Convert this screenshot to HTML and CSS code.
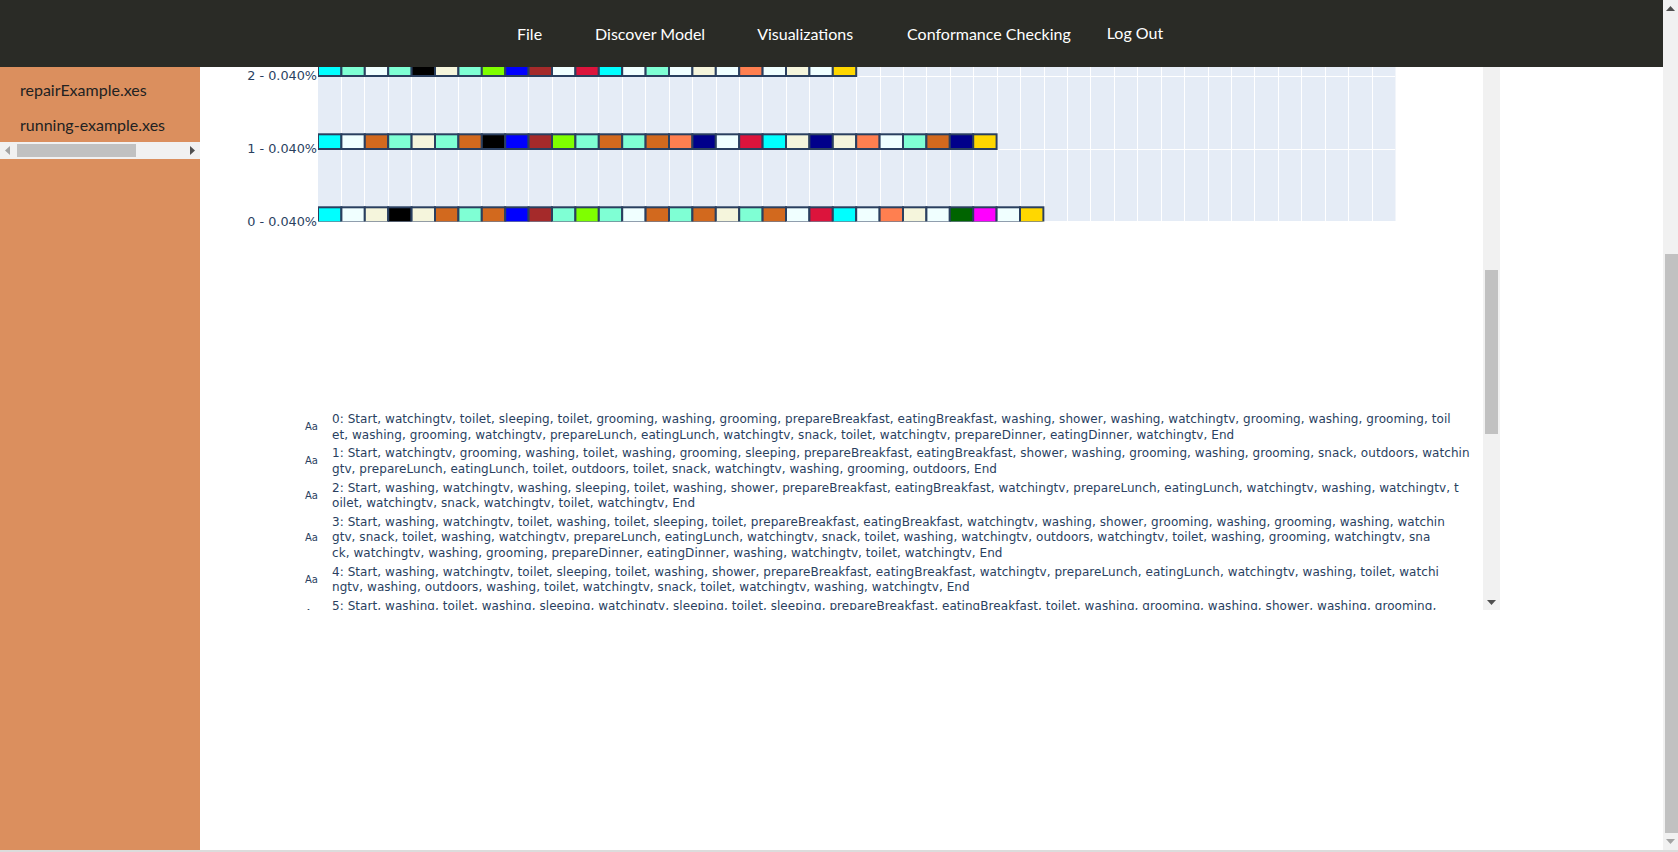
FILE: index.html
```html
<!DOCTYPE html>
<html lang="en">
<head>
<meta charset="utf-8">
<title>Process mining</title>
<link rel="stylesheet" href="styles.css">
</head>
<body>
<div class="page">
  <div class="column">
    <nav class="nav">
      <a class="nav-item nav-file">File</a>
      <a class="nav-item nav-discover">Discover Model</a>
      <a class="nav-item nav-vis">Visualizations</a>
      <a class="nav-item nav-conf">Conformance Checking</a>
      <a class="nav-item nav-logout">Log Out</a>
    </nav>
    <div class="below">
      <aside class="sidebar">
        <ul class="files">
          <li>repairExample.xes</li>
          <li>running-example.xes</li>
        </ul>
        <div class="hbar">
          <svg class="arrow" width="6" height="9" viewBox="0 0 6 9"><path d="M5 0v9L0 4.5z" fill="#a3a3a3"/></svg>
          <div class="hbar-track"><div class="hbar-thumb"></div></div>
          <svg class="arrow" width="6" height="9" viewBox="0 0 6 9"><path d="M1 0v9l5-4.5z" fill="#505050"/></svg>
        </div>
      </aside>
      <main class="main">
        <section class="panel">
          <div class="panel-body">
            <svg class="chart" width="1283" height="160" viewBox="200 67 1283 160">
              <defs><clipPath id="plot-clip"><rect x="318" y="0" width="1077.5" height="221.5"/></clipPath></defs>
              <rect x="318" y="0" width="1077.5" height="221" fill="#e5ecf6"/>
              <g clip-path="url(#plot-clip)">
              <g stroke="#fff" stroke-width="1">
                <path d="M341.5 0V221M364.5 0V221M388.5 0V221M411.5 0V221M435.5 0V221M458.5 0V221M481.5 0V221M505.5 0V221M528.5 0V221M552.5 0V221M575.5 0V221M598.5 0V221M622.5 0V221M645.5 0V221M669.5 0V221M692.5 0V221M716.5 0V221M739.5 0V221M762.5 0V221M786.5 0V221M809.5 0V221M833.5 0V221M856.5 0V221M880.5 0V221M903.5 0V221M926.5 0V221M950.5 0V221M973.5 0V221M997.5 0V221M1020.5 0V221M1044.5 0V221M1067.5 0V221M1090.5 0V221M1114.5 0V221M1137.5 0V221M1161.5 0V221M1184.5 0V221M1208.5 0V221M1231.5 0V221M1254.5 0V221M1278.5 0V221M1301.5 0V221M1325.5 0V221M1348.5 0V221M1372.5 0V221"/>
                <path d="M318 76.5H1395.5M318 149.5H1395.5"/>
              </g>
              <g class="bars" stroke="#2a3f5f" stroke-width="2">
                <rect x="318" y="61.3" fill="#00ffff"/><rect x="341.4" y="61.3" fill="#7fffd4"/><rect x="364.8" y="61.3" fill="#f0ffff"/><rect x="388.2" y="61.3" fill="#7fffd4"/><rect x="411.6" y="61.3" fill="#000000"/><rect x="435" y="61.3" fill="#f5f5dc"/><rect x="458.4" y="61.3" fill="#7fffd4"/><rect x="481.8" y="61.3" fill="#7fff00"/><rect x="505.2" y="61.3" fill="#0000ff"/><rect x="528.6" y="61.3" fill="#a52a2a"/><rect x="552" y="61.3" fill="#f0ffff"/><rect x="575.4" y="61.3" fill="#dc143c"/><rect x="598.8" y="61.3" fill="#00ffff"/><rect x="622.2" y="61.3" fill="#f0ffff"/><rect x="645.6" y="61.3" fill="#7fffd4"/><rect x="669" y="61.3" fill="#f0ffff"/><rect x="692.4" y="61.3" fill="#f5f5dc"/><rect x="715.8" y="61.3" fill="#f0ffff"/><rect x="739.2" y="61.3" fill="#ff7f50"/><rect x="762.6" y="61.3" fill="#f0ffff"/><rect x="786" y="61.3" fill="#f5f5dc"/><rect x="809.4" y="61.3" fill="#f0ffff"/><rect x="832.8" y="61.3" fill="#ffd700"/>
                <rect x="318" y="134.3" fill="#00ffff"/><rect x="341.4" y="134.3" fill="#f0ffff"/><rect x="364.8" y="134.3" fill="#d2691e"/><rect x="388.2" y="134.3" fill="#7fffd4"/><rect x="411.6" y="134.3" fill="#f5f5dc"/><rect x="435" y="134.3" fill="#7fffd4"/><rect x="458.4" y="134.3" fill="#d2691e"/><rect x="481.8" y="134.3" fill="#000000"/><rect x="505.2" y="134.3" fill="#0000ff"/><rect x="528.6" y="134.3" fill="#a52a2a"/><rect x="552" y="134.3" fill="#7fff00"/><rect x="575.4" y="134.3" fill="#7fffd4"/><rect x="598.8" y="134.3" fill="#d2691e"/><rect x="622.2" y="134.3" fill="#7fffd4"/><rect x="645.6" y="134.3" fill="#d2691e"/><rect x="669" y="134.3" fill="#ff7f50"/><rect x="692.4" y="134.3" fill="#00008b"/><rect x="715.8" y="134.3" fill="#f0ffff"/><rect x="739.2" y="134.3" fill="#dc143c"/><rect x="762.6" y="134.3" fill="#00ffff"/><rect x="786" y="134.3" fill="#f5f5dc"/><rect x="809.4" y="134.3" fill="#00008b"/><rect x="832.8" y="134.3" fill="#f5f5dc"/><rect x="856.2" y="134.3" fill="#ff7f50"/><rect x="879.6" y="134.3" fill="#f0ffff"/><rect x="903" y="134.3" fill="#7fffd4"/><rect x="926.4" y="134.3" fill="#d2691e"/><rect x="949.8" y="134.3" fill="#00008b"/><rect x="973.2" y="134.3" fill="#ffd700"/>
                <rect x="318" y="207.3" fill="#00ffff"/><rect x="341.4" y="207.3" fill="#f0ffff"/><rect x="364.8" y="207.3" fill="#f5f5dc"/><rect x="388.2" y="207.3" fill="#000000"/><rect x="411.6" y="207.3" fill="#f5f5dc"/><rect x="435" y="207.3" fill="#d2691e"/><rect x="458.4" y="207.3" fill="#7fffd4"/><rect x="481.8" y="207.3" fill="#d2691e"/><rect x="505.2" y="207.3" fill="#0000ff"/><rect x="528.6" y="207.3" fill="#a52a2a"/><rect x="552" y="207.3" fill="#7fffd4"/><rect x="575.4" y="207.3" fill="#7fff00"/><rect x="598.8" y="207.3" fill="#7fffd4"/><rect x="622.2" y="207.3" fill="#f0ffff"/><rect x="645.6" y="207.3" fill="#d2691e"/><rect x="669" y="207.3" fill="#7fffd4"/><rect x="692.4" y="207.3" fill="#d2691e"/><rect x="715.8" y="207.3" fill="#f5f5dc"/><rect x="739.2" y="207.3" fill="#7fffd4"/><rect x="762.6" y="207.3" fill="#d2691e"/><rect x="786" y="207.3" fill="#f0ffff"/><rect x="809.4" y="207.3" fill="#dc143c"/><rect x="832.8" y="207.3" fill="#00ffff"/><rect x="856.2" y="207.3" fill="#f0ffff"/><rect x="879.6" y="207.3" fill="#ff7f50"/><rect x="903" y="207.3" fill="#f5f5dc"/><rect x="926.4" y="207.3" fill="#f0ffff"/><rect x="949.8" y="207.3" fill="#006400"/><rect x="973.2" y="207.3" fill="#ff00ff"/><rect x="996.6" y="207.3" fill="#f0ffff"/><rect x="1020" y="207.3" fill="#ffd700"/>
              </g>
              </g>
              <g class="ticks">
                <text x="317" y="80">2 - 0.040%</text>
                <text x="317" y="153">1 - 0.040%</text>
                <text x="317" y="226">0 - 0.040%</text>
              </g>
            </svg>
            <ul class="traces">
              <li><span class="aa">Aa</span><div class="trace">0: Start, watchingtv, toilet, sleeping, toilet, grooming, washing, grooming, prepareBreakfast, eatingBreakfast, washing, shower, washing, watchingtv, grooming, washing, grooming, toil<br>et, washing, grooming, watchingtv, prepareLunch, eatingLunch, watchingtv, snack, toilet, watchingtv, prepareDinner, eatingDinner, watchingtv, End</div></li>
              <li><span class="aa">Aa</span><div class="trace">1: Start, watchingtv, grooming, washing, toilet, washing, grooming, sleeping, prepareBreakfast, eatingBreakfast, shower, washing, grooming, washing, grooming, snack, outdoors, watchin<br>gtv, prepareLunch, eatingLunch, toilet, outdoors, toilet, snack, watchingtv, washing, grooming, outdoors, End</div></li>
              <li><span class="aa">Aa</span><div class="trace">2: Start, washing, watchingtv, washing, sleeping, toilet, washing, shower, prepareBreakfast, eatingBreakfast, watchingtv, prepareLunch, eatingLunch, watchingtv, washing, watchingtv, t<br>oilet, watchingtv, snack, watchingtv, toilet, watchingtv, End</div></li>
              <li><span class="aa">Aa</span><div class="trace">3: Start, washing, watchingtv, toilet, washing, toilet, sleeping, toilet, prepareBreakfast, eatingBreakfast, watchingtv, washing, shower, grooming, washing, grooming, washing, watchin<br>gtv, snack, toilet, washing, watchingtv, prepareLunch, eatingLunch, watchingtv, snack, toilet, washing, watchingtv, outdoors, watchingtv, toilet, washing, grooming, watchingtv, sna<br>ck, watchingtv, washing, grooming, prepareDinner, eatingDinner, washing, watchingtv, toilet, watchingtv, End</div></li>
              <li><span class="aa">Aa</span><div class="trace">4: Start, washing, watchingtv, toilet, sleeping, toilet, washing, shower, prepareBreakfast, eatingBreakfast, watchingtv, prepareLunch, eatingLunch, watchingtv, washing, toilet, watchi<br>ngtv, washing, outdoors, washing, toilet, watchingtv, snack, toilet, watchingtv, washing, watchingtv, End</div></li>
              <li><span class="aa">Aa</span><div class="trace">5: Start, washing, toilet, washing, sleeping, watchingtv, sleeping, toilet, sleeping, prepareBreakfast, eatingBreakfast, toilet, washing, grooming, washing, shower, washing, grooming,<br>washing, End</div></li>
            </ul>
          </div>
          <div class="vbar vbar-inner">
            <div class="vbar-thumb"></div>
            <svg class="arrow-down" width="9" height="6" viewBox="0 0 9 6"><path d="M0 1h9L4.5 6z" fill="#505050"/></svg>
          </div>
        </section>
      </main>
    </div>
  </div>
  <div class="vbar vbar-page">
    <svg class="arrow-up" width="9" height="6" viewBox="0 0 9 6"><path d="M0 5h9L4.5 0z" fill="#505050"/></svg>
    <div class="vbar-thumb"></div>
    <svg class="arrow-down" width="9" height="6" viewBox="0 0 9 6"><path d="M0 1h9L4.5 6z" fill="#a3a3a3"/></svg>
  </div>
</div>
</body>
</html>
```
FILE: styles.css
```css
html, body {
  margin: 0;
  height: 100%;
  overflow: hidden;
  background: #fff;
}
.page {
  display: flex;
  height: 852px;
  box-sizing: border-box;
  border-bottom: 2px solid #dcdcdc;
}
.column {
  flex: 1;
  min-width: 0;
  display: flex;
  flex-direction: column;
}
.nav {
  height: 67px;
  flex: none;
  background: #2a2b26;
  display: flex;
  align-items: center;
  font: 16px "Lato", sans-serif;
  color: #fff;
}
.nav-item { white-space: nowrap; }
.nav-file { margin-left: 517px; }
.nav-discover { margin-left: 53px; }
.nav-vis { margin-left: 52px; }
.nav-conf { margin-left: 54px; }
.nav-logout { margin-left: 36px; position: relative; top: -1px; }
.below {
  flex: 1;
  min-height: 0;
  display: flex;
}
.sidebar {
  width: 200px;
  flex: none;
  background: #db8f5e;
}
.files {
  list-style: none;
  margin: 0;
  padding: 5px 0 0 20px;
  height: 70px;
  font: 16px/35px "Lato", sans-serif;
  color: #222;
  white-space: nowrap;
}
.hbar {
  height: 17px;
  background: #f1f1f1;
  display: flex;
  align-items: center;
  padding: 0 5px;
  gap: 6px;
}
.hbar-track { flex: 1; height: 13px; }
.hbar-thumb { width: 119px; height: 13px; background: #c1c1c1; }
.main {
  flex: 1;
  min-width: 0;
  display: flex;
  align-items: flex-start;
}
.panel {
  width: 1300px;
  height: 543px;
  display: flex;
  overflow: hidden;
}
.panel-body {
  flex: 1;
  min-width: 0;
}
.chart { display: block; }
.bars rect { width: 23.4px; height: 14.7px; }
.ticks text {
  font: 12.8px "DejaVu Sans", Verdana, sans-serif;
  fill: #2a3f5f;
  text-anchor: end;
}
.traces {
  list-style: none;
  margin: 185px 0 0;
  padding: 0 0 0 105px;
}
.traces li {
  display: flex;
  align-items: center;
  margin-bottom: 3.3px;
}
.aa {
  width: 27px;
  flex: none;
  margin-bottom: 2px;
  font: 10px "DejaVu Sans", sans-serif;
  color: #2a3f5f;
}
.trace {
  font: 12px/15.5px "DejaVu Sans", Verdana, sans-serif;
  letter-spacing: 0.06px;
  color: #2a3f5f;
  white-space: nowrap;
}
.vbar {
  flex: none;
  background: #f1f1f1;
  display: flex;
  flex-direction: column;
  align-items: center;
}
.vbar-inner {
  width: 17px;
  height: 543px;
  padding-top: 203px;
  box-sizing: border-box;
}
.vbar-inner .vbar-thumb { width: 13px; height: 164px; background: #c1c1c1; }
.vbar-inner .arrow-down { margin-top: auto; margin-bottom: 5px; }
.vbar-page {
  width: 15px;
  height: 850px;
  align-items: flex-end;
}
.vbar-page .arrow-up { margin: 6px 3px 0 0; }
.vbar-page .vbar-thumb { width: 13px; height: 579px; background: #c1c1c1; margin-top: 242px; }
.vbar-page .arrow-down { margin: 5px 3px 0 0; }
```
